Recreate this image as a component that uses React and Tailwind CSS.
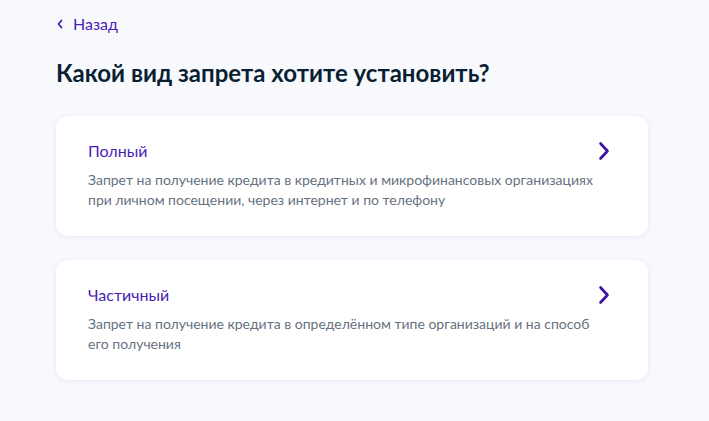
import React from "react";

function ChevronRight() {
  return (
    <svg width="24" height="24" viewBox="0 0 24 24" fill="none">
      <path d="M8.5 4.5 L15.5 12 L8.5 19.5" stroke="#3d10a8" strokeWidth="2.6" strokeLinecap="round" strokeLinejoin="round" />
    </svg>
  );
}

function ChevronLeft() {
  return (
    <svg width="8" height="10" viewBox="0 0 8 10" fill="none">
      <path d="M5.5 1.5 L2.5 5 L5.5 8.5" stroke="#4a1db5" strokeWidth="1.8" strokeLinecap="round" strokeLinejoin="round" />
    </svg>
  );
}

function Card({ title, text }) {
  return (
    <div className="bg-white rounded-xl shadow-[0_1px_6px_rgba(11,31,51,0.07)] px-8 pt-[23px] pb-[26px] cursor-pointer">
      <div className="flex items-center justify-between h-6">
        <div className="text-[16px] leading-6 text-[#4a1db5]">{title}</div>
        <ChevronRight />
      </div>
      <div className="mt-[7px] max-w-[521px] text-[14px] leading-5 text-[#66727f]">{text}</div>
    </div>
  );
}

export default function App() {
  return (
    <div className="min-h-[421px] bg-[#f8f9fd] font-['Lato','Noto_Sans',sans-serif]">
      <div className="ml-14 w-[592px] pt-3 pb-10">
        <div className="flex items-center gap-[9px] text-[16px] leading-6 text-[#4a1db5]">
          <ChevronLeft />
          <span>Назад</span>
        </div>
        <h1 className="mt-[21px] text-[24px] leading-8 font-bold text-[#0b1f33]">
          Какой вид запрета хотите установить?
        </h1>
        <div className="mt-[27px] flex flex-col gap-6">
          <Card
            title="Полный"
            text="Запрет на получение кредита в кредитных и микрофинансовых организациях при личном посещении, через интернет и по телефону"
          />
          <Card
            title="Частичный"
            text="Запрет на получение кредита в определённом типе организаций и на способ его получения"
          />
        </div>
      </div>
    </div>
  );
}
